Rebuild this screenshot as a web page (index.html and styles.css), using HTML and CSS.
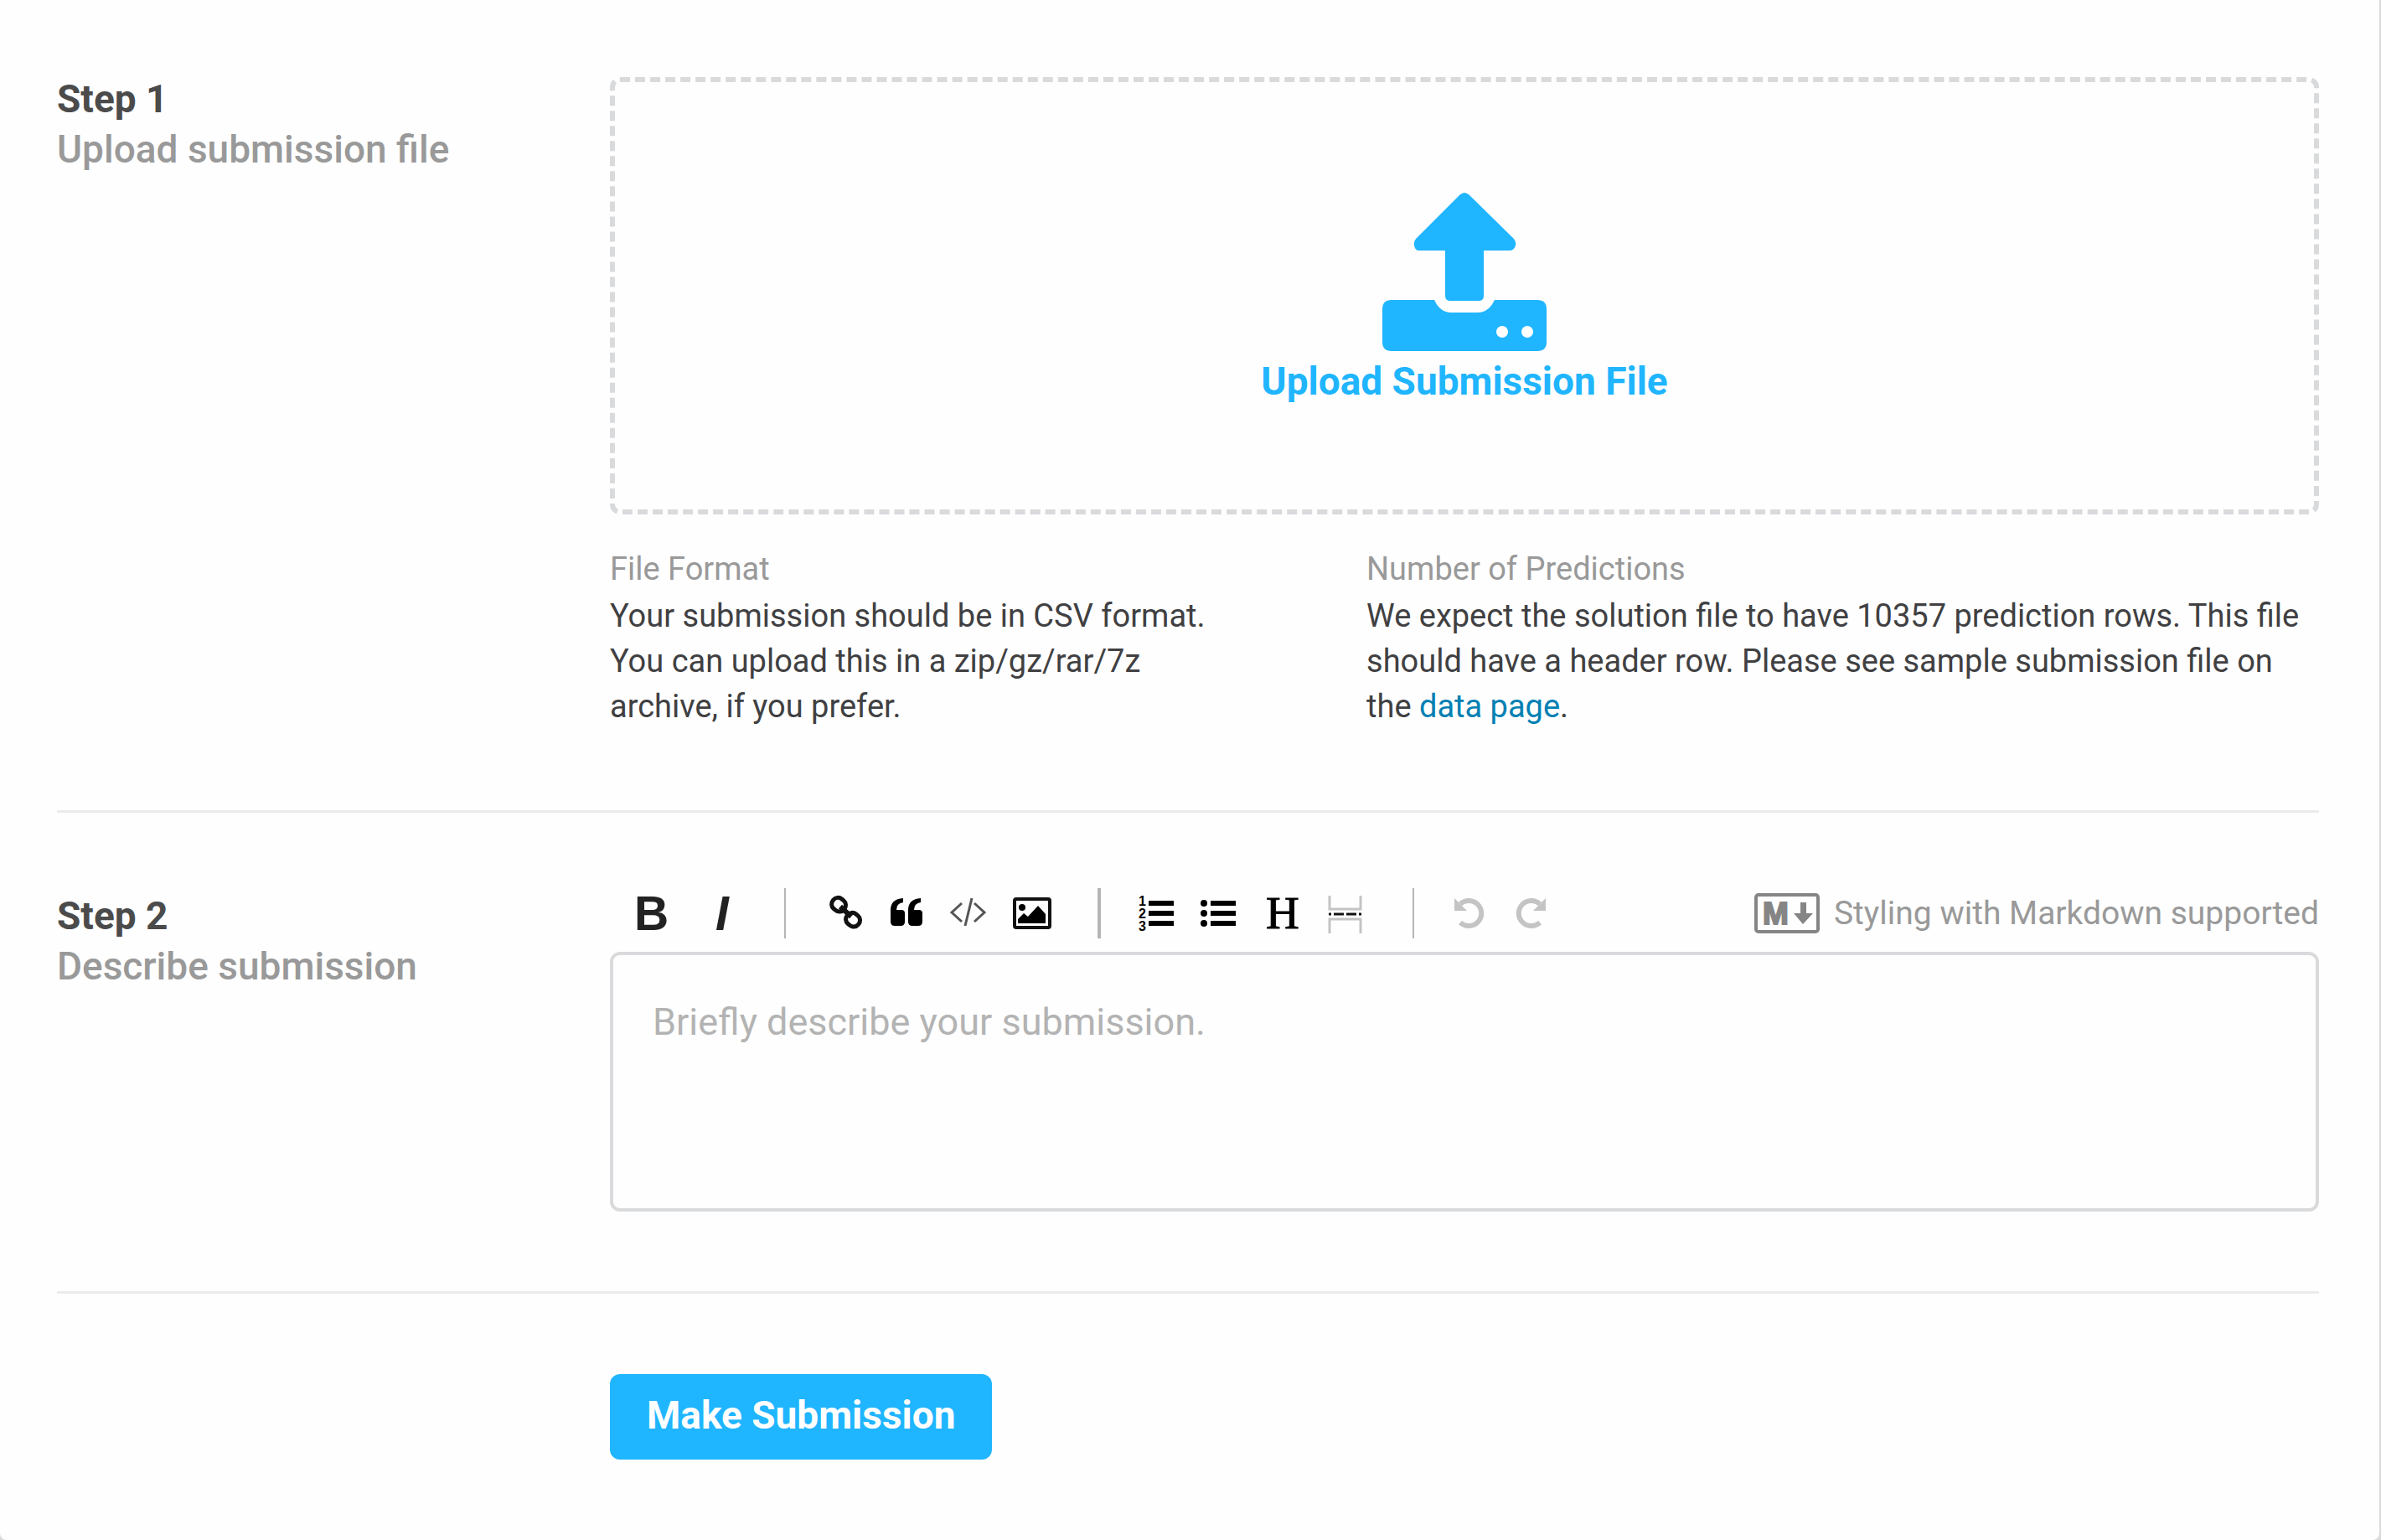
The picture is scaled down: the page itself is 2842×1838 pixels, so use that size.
FILE: index.html
```html
<!DOCTYPE html>
<html lang="en">
<head>
<meta charset="utf-8">
<title>Make a submission</title>
<link rel="stylesheet" href="styles.css">
</head>
<body>
<form class="card">
  <section class="step step-upload">
    <div class="step-head">
      <h2 class="step-title">Step 1</h2>
      <p class="step-subtitle">Upload submission file</p>
    </div>
    <div class="step-body">
      <button type="button" class="dropzone">
        <svg class="upload-icon" viewBox="1650 230 196 190" aria-hidden="true">
          <path d="M1742.500 232.500Q1748 227.500 1753.500 232.500L1807 285Q1810 289 1809 293Q1807 299 1802 299H1771V353Q1771 359 1765 359H1731Q1725 359 1725 353V299H1694Q1689 299 1688 293Q1687 289 1690 285Z"/>
          <path fill-rule="evenodd" d="M1661 358H1712Q1719 373 1732 373H1764Q1777 373 1784 358H1835Q1846 358 1846 369V408Q1846 419 1835 419H1661Q1650 419 1650 408V369Q1650 358 1661 358ZM1793 389a7 7 0 1 0 .01 0ZM1823 389a7 7 0 1 0 .01 0Z"/>
        </svg>
        <span class="dropzone-text">Upload Submission File</span>
      </button>
      <div class="notes">
        <div class="note">
          <h3 class="note-title">File Format</h3>
          <p class="note-text">Your submission should be in CSV format. You can upload this in a zip/gz/rar/7z archive, if you prefer.</p>
        </div>
        <div class="note">
          <h3 class="note-title">Number of Predictions</h3>
          <p class="note-text">We expect the solution file to have 10357 prediction rows. This file should have a header row. Please see sample submission file on the <a class="link" href="#data">data page</a>.</p>
        </div>
      </div>
    </div>
  </section>

  <section class="step step-describe">
    <div class="step-head">
      <h2 class="step-title">Step 2</h2>
      <label class="step-subtitle" for="description">Describe submission</label>
    </div>
    <div class="step-body">
      <div class="toolbar">
        <div class="tools tools-first">
          <button type="button" class="tool" aria-label="Bold"><svg viewBox="750 1060 75 60"><text class="glyph-bold" x="757" y="1110">B</text></svg></button>
          <button type="button" class="tool" aria-label="Italic"><svg viewBox="825 1060 75 60"><text class="glyph-italic" x="854" y="1110">I</text></svg></button>
        </div>
        <div class="tools">
          <button type="button" class="tool" aria-label="Link"><svg viewBox="974 1060 75 60"><g fill="none" stroke="#111" stroke-width="5"><rect x="993" y="1072" width="17" height="15" rx="7" transform="rotate(40 1001 1079)"/><rect x="1010" y="1090" width="17" height="15" rx="7" transform="rotate(40 1018 1097)"/><path d="M1003 1082l13 12" stroke-width="6"/></g></svg></button>
          <button type="button" class="tool" aria-label="Quote"><svg viewBox="1049 1060 75 60"><path d="M1078 1072v5q-8 1-8 9h6q4 0 4 4v10q0 5-5 5h-7q-5 0-5-5v-14q0-13 15-14zM1099 1072v5q-8 1-8 9h6q4 0 4 4v10q0 5-5 5h-7q-5 0-5-5v-14q0-13 15-14z"/></svg></button>
          <button type="button" class="tool" aria-label="Code"><svg viewBox="1124 1060 75 60"><path d="M1148 1078l-12 11l12 11M1163 1078l12 11l-12 11M1160 1072l-8 33" fill="none" stroke="#555" stroke-width="3"/></svg></button>
          <button type="button" class="tool" aria-label="Image"><svg viewBox="1199 1060 75 60"><rect x="1211" y="1073" width="42" height="34" rx="2" fill="none" stroke="#111" stroke-width="4"/><circle cx="1220" cy="1083" r="4"/><path d="M1215 1102v-5l7-7l5 4l12-13l9 10v11z"/></svg></button>
        </div>
        <div class="tools tools-wide-rule">
          <button type="button" class="tool" aria-label="Numbered list"><svg viewBox="1350 1060 75 60"><path d="M1371 1075h30v6h-30zM1371 1087h30v6h-30zM1371 1099h30v6h-30z"/><g class="glyph-digit"><text x="1359" y="1081">1</text><text x="1359" y="1096">2</text><text x="1359" y="1111">3</text></g></svg></button>
          <button type="button" class="tool" aria-label="Bulleted list"><svg viewBox="1425 1060 75 60"><path d="M1445 1075h30v6h-30zM1445 1087h30v6h-30zM1445 1099h30v6h-30z"/><circle cx="1437" cy="1078" r="4"/><circle cx="1437" cy="1090" r="4"/><circle cx="1437" cy="1102" r="4"/></svg></button>
          <button type="button" class="tool" aria-label="Heading"><svg viewBox="1500 1060 75 60"><text class="glyph-heading" x="1511" y="1108">H</text></svg></button>
          <button type="button" class="tool" aria-label="Horizontal rule"><svg viewBox="1575 1060 75 60"><path d="M1587 1069v16h37v-16M1587 1114v-17h37v17" fill="none" stroke="#c4c4c4" stroke-width="3"/><path d="M1586 1091h3m3 0h12m3 0h12m3 0h3" stroke="#111" stroke-width="3"/></svg></button>
        </div>
        <div class="tools">
          <button type="button" class="tool" aria-label="Undo"><svg viewBox="1724 1060 75 60"><path d="M1743 1079a15 15 0 1 1 0 22" fill="none" stroke="#c4c4c4" stroke-width="6"/><path d="M1736 1072v15h15z" fill="#c4c4c4"/></svg></button>
          <button type="button" class="tool" aria-label="Redo"><svg viewBox="1799 1060 75 60"><path d="M1838 1079a15 15 0 1 0 0 22" fill="none" stroke="#c4c4c4" stroke-width="6"/><path d="M1845 1072v15h-15z" fill="#c4c4c4"/></svg></button>
        </div>
        <div class="markdown">
          <svg class="markdown-icon" viewBox="2092 1066 78 48" aria-hidden="true"><rect x="2094" y="1068" width="74" height="44" rx="3" fill="none" stroke="#858585" stroke-width="4"/><text class="glyph-mark" x="2102" y="1103">M</text><path d="M2147 1077h7v13h8l-12 13l-11-13h8z"/></svg>
          <span>Styling with Markdown supported</span>
        </div>
      </div>
      <textarea class="editor" id="description" placeholder="Briefly describe your submission."></textarea>
    </div>
  </section>

  <section class="step step-submit">
    <div class="step-body">
      <button type="submit" class="submit">Make Submission</button>
    </div>
  </section>
</form>
</body>
</html>
```
FILE: styles.css
```css
* {
  box-sizing: border-box;
}

html {
  background: #dadada;
}

body {
  margin: 0;
  font-family: Roboto, "Liberation Sans", sans-serif;
  font-size: 39px;
  line-height: 54px;
  color: #404042;
}

h2,
h3,
p {
  margin: 0;
}

button {
  margin: 0;
  font-family: inherit;
  cursor: pointer;
}

.card {
  min-height: 100vh;
  margin-right: 2px;
  padding: 0 72px 0 68px;
  background: #fefefe;
  border-radius: 0 0 8px 8px;
}

.step {
  display: grid;
  grid-template-columns: 660px minmax(0, 1fr);
  border-bottom: 3px solid #ebebeb;
}

.step-upload {
  padding: 88px 0 97px;
}

.step-upload .step-body {
  padding-top: 4px;
}

.step-describe {
  padding: 90px 0 95px;
}

.step-describe .step-head {
  padding-top: 3px;
}

.step-submit {
  padding: 96px 0;
  border-bottom: 0;
}

.step-submit .step-body {
  grid-column: 2;
}

.step-title,
.step-subtitle {
  display: block;
  font-size: 46px;
  line-height: 60px;
}

.step-title {
  font-weight: 700;
  color: #4b4b4b;
}

.step-subtitle {
  font-weight: 500;
  color: #999;
}

.dropzone {
  display: flex;
  flex-direction: column;
  align-items: center;
  justify-content: center;
  gap: 5px;
  width: 100%;
  height: 522px;
  padding: 8px 0 0;
  border: 6px dashed #d9dadc;
  border-radius: 12px;
  background: none;
  color: #20b5ff;
}

.upload-icon {
  width: 196px;
  height: 190px;
  fill: #20b5ff;
}

.dropzone-text {
  font-size: 46px;
  font-weight: 700;
  line-height: 60px;
}

.notes {
  display: grid;
  grid-template-columns: 13fr 20fr;
  gap: 164px;
  margin-top: 36px;
}

.note {
  padding-right: 16px;
  font-size: 38px;
}

.note-title {
  font-size: 38px;
  font-weight: 400;
  line-height: 58px;
  color: #999;
}

.link {
  color: #0080b3;
  text-decoration: none;
}

.toolbar {
  display: flex;
  align-items: center;
  height: 60px;
  margin-bottom: 16px;
}

.tools {
  display: flex;
  padding: 0 36px;
}

.tools + .tools {
  border-left: 2px solid #b5b5b5;
}

.tools + .tools-wide-rule {
  border-left-width: 4px;
}

.tools-first {
  padding-left: 22px;
}

.tool {
  width: 75px;
  height: 60px;
  padding: 0;
  border: 0;
  background: none;
}

.tool svg {
  display: block;
  width: 75px;
  height: 60px;
  overflow: visible;
}

.glyph-bold {
  font: 700 57px "Liberation Sans", sans-serif;
  fill: #222;
}

.glyph-italic {
  font: italic 700 57px "Liberation Sans", sans-serif;
  fill: #222;
}

.glyph-heading {
  font: 400 55px "Liberation Serif", serif;
  stroke: #000;
}

.glyph-digit {
  font: 700 16px "Liberation Sans", sans-serif;
}

.markdown {
  display: flex;
  align-items: center;
  gap: 17px;
  margin-left: auto;
  color: #999;
  white-space: nowrap;
}

.markdown-icon {
  width: 78px;
  height: 48px;
  fill: #858585;
}

.glyph-mark {
  font: 700 37px "Liberation Sans", sans-serif;
  stroke: #858585;
  stroke-width: 2px;
}

.editor {
  display: block;
  width: 100%;
  height: 310px;
  padding: 50px 47px;
  border: 4px solid #d9dadc;
  border-radius: 12px;
  background: none;
  font-family: inherit;
  font-size: 45px;
  line-height: 60px;
  color: #404042;
  resize: none;
}

.editor::placeholder {
  color: #b3b3b3;
}

.submit {
  height: 102px;
  padding: 0 44px 5px;
  border: 0;
  border-radius: 12px;
  background: #20b5ff;
  font-size: 46px;
  font-weight: 700;
  color: #fff;
}
```
